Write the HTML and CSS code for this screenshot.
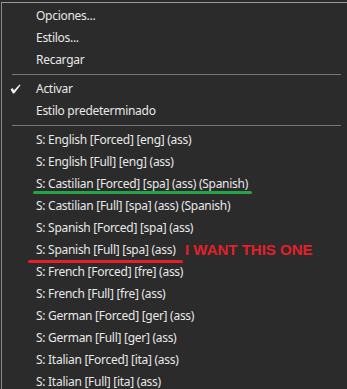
FILE: index.html
```html
<!DOCTYPE html>
<html lang="es">
    <head>
        <title>menu</title>
        <meta charset="UTF-8"/>
        <link rel="stylesheet" href="styles.css">
    </head>
    <body>
        <div id="menu">
            <div class="item">Opciones...</div>
            <div class="item">Estilos...</div>
            <div class="item">Recargar</div>
            <div class="sep"></div>
            <div class="item">
                <svg class="check" width="11" height="10" viewBox="0 0 11 10">
                    <path d="M0.5 5.5 L2.5 4 L4 6.2 L9.5 0.5 L10.5 1.3 L4.2 9.5 L3 9.5 Z" fill="#f0f0f0"/>
                </svg>
                Activar
            </div>
            <div class="item">Estilo predeterminado</div>
            <div class="sep"></div>
            <div class="item">S: English [Forced] [eng] (ass)</div>
            <div class="item">S: English [Full] [eng] (ass)</div>
            <div class="item">S: Castilian [Forced] [spa] (ass) (Spanish)<span class="green"></span></div>
            <div class="item">S: Castilian [Full] [spa] (ass) (Spanish)</div>
            <div class="item">S: Spanish [Forced] [spa] (ass)</div>
            <div class="item">S: Spanish [Full] [spa] (ass)<span class="red"></span><span class="note">I WANT THIS ONE</span></div>
            <div class="item">S: French [Forced] [fre] (ass)</div>
            <div class="item">S: French [Full] [fre] (ass)</div>
            <div class="item">S: German [Forced] [ger] (ass)</div>
            <div class="item">S: German [Full] [ger] (ass)</div>
            <div class="item">S: Italian [Forced] [ita] (ass)</div>
            <div class="item">S: Italian [Full] [ita] (ass)</div>
        </div>
    </body>
</html>
```

FILE: styles.css
```css
* {
    margin: 0px;
    padding: 0px;
}

body {
    background: #2b2b2b;
    font-family: "Noto Sans", "Open Sans", sans-serif;
    overflow: hidden;
}

#menu {
    margin: 2px 0 0 1px;
    padding-top: 2px;
    border-top: 1px solid #9a9a9a;
    border-left: 1px solid #8a8a8a;
}

.item {
    position: relative;
    height: 22px;
    line-height: 22px;
    padding-left: 34px;
    font-size: 12px;
    letter-spacing: -0.28px;
    color: #e8e8e8;
    white-space: nowrap;
}

.sep {
    height: 1px;
    margin: 3px 6px 3px 10px;
    background: #777777;
}

.check {
    position: absolute;
    left: 8px;
    top: 6px;
}

.green {
    position: absolute;
    left: 31px;
    width: 219px;
    top: 18px;
    height: 3px;
    border-radius: 2px;
    background: #22a447;
}

.red {
    position: absolute;
    left: 26px;
    width: 155px;
    top: 21px;
    height: 3px;
    border-radius: 2px;
    background: #e3202a;
}

.note {
    position: absolute;
    left: 183px;
    top: 0px;
    font-family: "Liberation Sans", Arial, sans-serif;
    font-weight: bold;
    font-size: 15px;
    letter-spacing: 0;
    color: #e3202a;
}
```
